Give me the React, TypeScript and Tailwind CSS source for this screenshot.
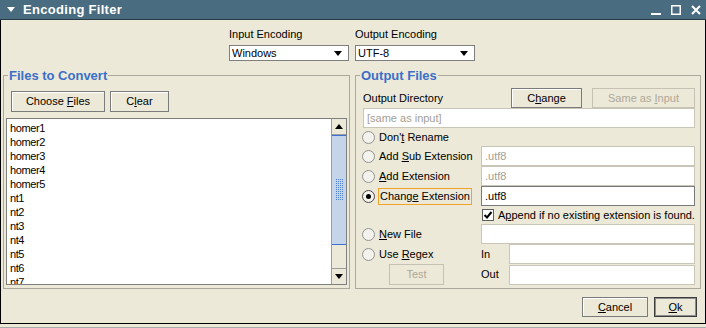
import type { ReactNode } from "react";

const FILES = [
  "homer1",
  "homer2",
  "homer3",
  "homer4",
  "homer5",
  "nt1",
  "nt2",
  "nt3",
  "nt4",
  "nt5",
  "nt6",
  "nt7",
];

function Button({
  children,
  width,
  disabled,
  primary,
  height = "h-[21px]",
}: {
  children: ReactNode;
  width: string;
  disabled?: boolean;
  primary?: boolean;
  height?: string;
}) {
  let tone = "border-[#7b7b7b] text-black shadow-[inset_1px_1px_0_#ffffff]";
  if (disabled) tone = "border-[#c5c2b4] text-[#aca899]";
  if (primary) tone = "border-[#3c3c3c] text-black shadow-[inset_0_0_0_1px_#8d8d8d]";
  return (
    <button
      type="button"
      className={`flex shrink-0 items-center justify-center border bg-[#ece9d8] ${width} ${height} ${tone}`}
    >
      <span>{children}</span>
    </button>
  );
}

function Field({ value, disabled, width = "flex-1" }: { value?: string; disabled?: boolean; width?: string }) {
  return (
    <div
      className={`flex h-[20px] items-center bg-white pl-[3px] ${width} border ${
        disabled ? "border-[#c9c6b8] text-[#a3a094]" : "border-[#7a7a7a] text-black"
      }`}
    >
      {value}
    </div>
  );
}

function Radio({ checked }: { checked?: boolean }) {
  return (
    <span
      className={`flex h-[13px] w-[13px] shrink-0 items-center justify-center rounded-full border bg-[#f3f2ec] ${
        checked ? "border-[#4a4a4a]" : "border-[#929292]"
      }`}
    >
      {checked ? <span className="h-[5px] w-[5px] rounded-full bg-black" /> : null}
    </span>
  );
}

function Combo({ value }: { value: string }) {
  return (
    <div className="flex h-[16px] w-[120px] items-center justify-between border border-[#7f7f7f] bg-white pl-[2px] pr-[6px]">
      <span>{value}</span>
      <svg width="8" height="5" viewBox="0 0 8 5" aria-hidden>
        <path d="M0 0h8L4 5z" fill="#000" />
      </svg>
    </div>
  );
}

function Arrow({ up }: { up?: boolean }) {
  return (
    <svg width="8" height="5" viewBox="0 0 8 5" aria-hidden>
      <path d={up ? "M0 5h8L4 0z" : "M0 0h8L4 5z"} fill="#000" />
    </svg>
  );
}

function Legend({ children }: { children: ReactNode }) {
  return (
    <legend className="ml-[4px] px-[1px] text-[13px] font-bold leading-[15px] text-[#3b6fc9]">
      {children}
    </legend>
  );
}

function Scrollbar() {
  return (
    <div className="flex w-[15px] shrink-0 flex-col border-l border-[#9d9d9d]">
      <div className="flex h-[16px] items-center justify-center border-b border-[#9d9d9d] bg-[#ece9d8]">
        <Arrow up />
      </div>
      <div className="flex h-[110px] items-center justify-center border-y border-[#3d72d4] bg-[#c4d5ea]">
        <svg width="7" height="22" viewBox="0 0 7 22" aria-hidden>
          <defs>
            <pattern id="grip" width="2" height="2" patternUnits="userSpaceOnUse">
              <rect width="1" height="1" fill="#4f7fd0" />
            </pattern>
          </defs>
          <rect width="7" height="22" fill="url(#grip)" />
        </svg>
      </div>
      <div className="h-[23px] bg-[#ece9d8]" />
      <div className="flex h-[16px] items-center justify-center border-t border-[#9d9d9d] bg-[#ece9d8]">
        <Arrow />
      </div>
    </div>
  );
}

function Option({ children, checked, focused }: { children: ReactNode; checked?: boolean; focused?: boolean }) {
  return (
    <div className={`flex h-full items-center pl-[6px] ${focused ? "gap-[3px]" : "gap-[4px]"}`}>
      <Radio checked={checked} />
      {focused ? (
        <span className="flex h-[17px] items-center border border-[#f2a42a] px-[1px]">
          <span>{children}</span>
        </span>
      ) : (
        <span>{children}</span>
      )}
    </div>
  );
}

export default function App() {
  return (
    <div className="h-[328px] w-[706px] bg-[#ece9d8] font-['Liberation_Sans',Arial,sans-serif] text-[11px] leading-[13px] text-black">
      {/* title bar */}
      <div className="flex h-[20px] items-center border-b border-[#283b47] bg-[#4a6c80] text-white">
        <svg className="ml-[7px]" width="8" height="5" viewBox="0 0 8 5" aria-hidden>
          <path d="M0 0h8L4 5z" fill="#fff" />
        </svg>
        <span className="ml-[8px] text-[13px] font-bold tracking-[0.3px]">Encoding Filter</span>
        <div className="ml-auto mr-[5px] flex items-center gap-[10px]">
          <svg width="10" height="10" viewBox="0 0 10 10" aria-hidden>
            <rect x="0" y="8" width="10" height="2" fill="#fff" />
          </svg>
          <svg width="10" height="10" viewBox="0 0 10 10" aria-hidden>
            <rect x="0.75" y="0.75" width="8.5" height="8.5" fill="none" stroke="#fff" strokeWidth="1.5" />
          </svg>
          <svg width="10" height="10" viewBox="0 0 10 10" aria-hidden>
            <path d="M1 1l8 8M9 1l-8 8" stroke="#fff" strokeWidth="2" />
          </svg>
        </div>
      </div>

      {/* body */}
      <div className="flex h-[304px] flex-col border-x border-b border-black pl-[2px] pt-[8px]">
        <div className="grid grid-cols-[347px_346px] gap-x-[5px]">
          <div className="flex justify-end pr-[1px]">
            <div className="flex flex-col gap-[4px]">
              <span>Input Encoding</span>
              <Combo value="Windows" />
            </div>
          </div>
          <div className="flex flex-col gap-[4px]">
            <span>Output Encoding</span>
            <Combo value="UTF-8" />
          </div>

          {/* files to convert */}
          <fieldset className="mt-[7px] h-[221px] border border-[#aaa99b]">
            <Legend>Files to Convert</Legend>
            <div className="mt-[8px] flex gap-[5px] pl-[7px]">
              <Button width="w-[94px]">
                Choose <u>F</u>iles
              </Button>
              <Button width="w-[59px]">
                C<u>l</u>ear
              </Button>
            </div>
            <div className="mx-[2px] mt-[6px] flex h-[167px] border border-[#7f7f7f] bg-white">
              <div className="flex-1 overflow-hidden pl-[3px] pt-[2px] tracking-[-0.4px]">
                {FILES.map((f) => (
                  <div key={f} className="h-[14px] leading-[14px]">
                    {f}
                  </div>
                ))}
              </div>
              <Scrollbar />
            </div>
          </fieldset>

          {/* output files */}
          <fieldset className="mt-[7px] h-[221px] border border-[#aaa99b] pr-[5px]">
            <Legend>Output Files</Legend>
            <div className="mt-[5px] flex h-[20px] items-center pl-[7px]">
              <span className="flex-1">Output Directory</span>
              <Button width="w-[71px]" height="h-[20px]">
                C<u>h</u>ange
              </Button>
              <div className="w-[10px]" />
              <Button width="w-[103px]" height="h-[20px]" disabled>
                Same as <u>I</u>nput
              </Button>
            </div>
            <div className="flex pl-[7px]">
              <Field value="[same as input]" disabled />
            </div>

            <div className="grid grid-cols-[125px_1fr] grid-rows-[18px_20px_20px_20px_18px_20px_20px_21px]">
              <Option>
                Don'<u>t</u> Rename
              </Option>
              <div />

              <Option>
                Add <u>S</u>ub Extension
              </Option>
              <Field value=".utf8" disabled />

              <Option>
                <u>A</u>dd Extension
              </Option>
              <Field value=".utf8" disabled />

              <Option checked focused>
                Chang<u>e</u> Extension
              </Option>
              <Field value=".utf8" />

              <div />
              <div className="flex items-center gap-[4px] pl-[1px]">
                <span className="flex h-[12px] w-[12px] items-center justify-center border border-[#5e5e5e] bg-white">
                  <svg width="10" height="10" viewBox="0 0 10 10" aria-hidden>
                    <path d="M1.5 5l2.5 2.5L8.5 2" fill="none" stroke="#000" strokeWidth="2" />
                  </svg>
                </span>
                <span>
                  A<u>p</u>pend if no existing extension is found.
                </span>
              </div>

              <Option>
                <u>N</u>ew File
              </Option>
              <Field disabled />

              <Option>
                Use <u>R</u>egex
              </Option>
              <div className="flex items-center">
                <span className="w-[28px]">In</span>
                <Field disabled />
              </div>

              <div className="flex items-center pl-[33px]">
                <Button width="w-[55px]" disabled>
                  Test
                </Button>
              </div>
              <div className="flex items-center">
                <span className="w-[28px]">Out</span>
                <Field disabled />
              </div>
            </div>
          </fieldset>
        </div>

        {/* dialog buttons */}
        <div className="mt-[8px] flex justify-end gap-[6px] pr-[8px]">
          <Button width="w-[66px]" height="h-[20px]">
            <u>C</u>ancel
          </Button>
          <Button width="w-[43px]" height="h-[20px]" primary>
            <u>O</u>k
          </Button>
        </div>
      </div>
      <div className="h-[4px] border-b border-[#a8a8a8]" />
    </div>
  );
}
